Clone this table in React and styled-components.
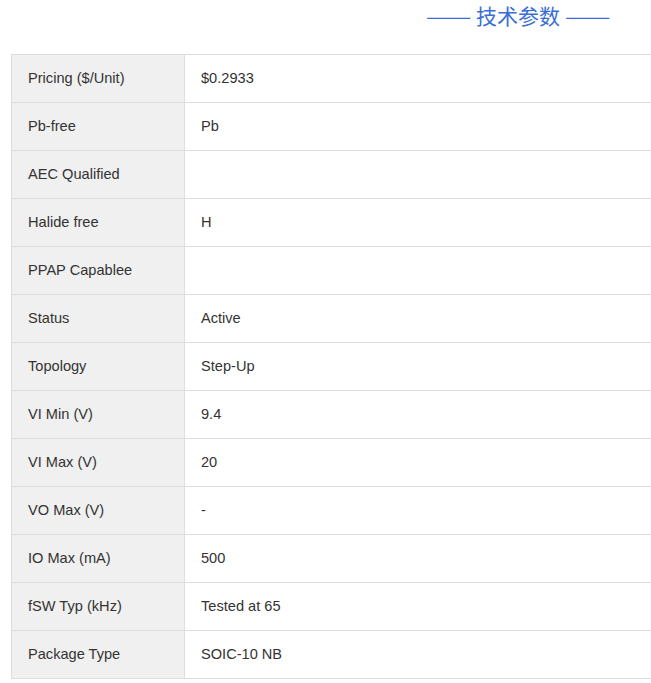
import React from "react";
import styled, { createGlobalStyle } from "styled-components";

const GlobalStyle = createGlobalStyle`
  html, body {
    margin: 0;
    padding: 0;
    background: #fff;
    overflow: hidden;
  }
  body {
    font-family: "Liberation Sans", Arial, "Noto Sans CJK SC", sans-serif;
  }
`;

const specs = [
  ["Pricing ($/Unit)", "$0.2933"],
  ["Pb-free", "Pb"],
  ["AEC Qualified", ""],
  ["Halide free", "H"],
  ["PPAP Capablee", ""],
  ["Status", "Active"],
  ["Topology", "Step-Up"],
  ["VI Min (V)", "9.4"],
  ["VI Max (V)", "20"],
  ["VO Max (V)", "-"],
  ["IO Max (mA)", "500"],
  ["fSW Typ (kHz)", "Tested at 65"],
  ["Package Type", "SOIC-10 NB"],
];

const App = () => {
  return (
    <Page>
      <GlobalStyle />
      <Section>
        <Title>
          <Dash>——</Dash> 技术参数 <Dash>——</Dash>
        </Title>
        <Table>
          <tbody>
            {specs.map(([label, value]) => (
              <Row key={label}>
                <Label>{label}</Label>
                <Value>{value}</Value>
              </Row>
            ))}
          </tbody>
        </Table>
      </Section>
    </Page>
  );
};

export default App;

const Page = styled.div`
  width: 651px;
  height: 683px;
  overflow: hidden;
`;

const Section = styled.section`
  width: 1014px;
  margin-left: 11px;
`;

const Title = styled.h2`
  margin: 0;
  height: 54px;
  padding-top: 2px;
  box-sizing: border-box;
  text-align: center;
  font-family: "Noto Sans CJK SC", "Liberation Sans", sans-serif;
  font-weight: normal;
  font-size: 21px;
  line-height: 26px;
  color: #3a6fd6;
`;

const Dash = styled.span`
  display: inline-block;
  transform: scaleX(1.3);
  margin: 0 5px;
`;

const Table = styled.table`
  width: 100%;
  border-collapse: collapse;
  border: 1px solid #dddddd;
`;

const Row = styled.tr`
  height: 48px;
`;

const Label = styled.td`
  width: 173px;
  padding: 0 16px 2px;
  box-sizing: border-box;
  background: #f0f0f0;
  border: 1px solid #dddddd;
  font-size: 14.6px;
  color: #333;
`;

const Value = styled.td`
  padding: 0 16px 2px;
  border: 1px solid #dddddd;
  font-size: 14.6px;
  color: #333;
`;
